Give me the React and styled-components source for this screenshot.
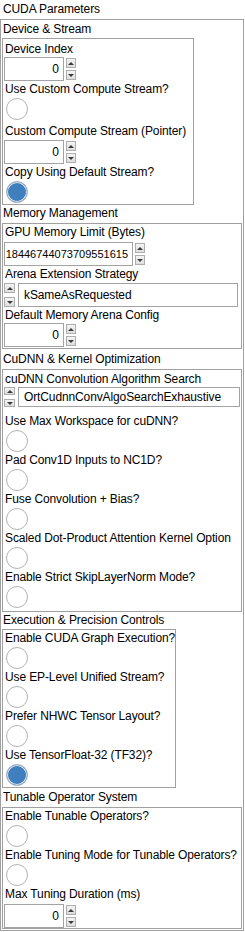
import styled, { createGlobalStyle } from "styled-components";

const GlobalStyle = createGlobalStyle`
  html, body {
    margin: 0;
    padding: 0;
    background: #ffffff;
  }
  body {
    font-family: "Liberation Sans", Arial, sans-serif;
    font-size: 12px;
    letter-spacing: -0.12px;
    color: #000;
  }
`;

const Panel = styled.div`
  width: 245px;
  height: 932px;
  overflow: hidden;
`;

const Caption = styled.div`
  height: 19px;
  box-sizing: border-box;
  padding: 1px 0 0 3px;
  line-height: 16px;
  white-space: nowrap;
`;

const Frame = styled.div`
  width: 244px;
  height: 912px;
  box-sizing: border-box;
  border: 1px solid #a0a0a0;
  display: flex;
  flex-direction: column;
`;

const SectionTitle = styled.div`
  height: ${(p) => p.$h}px;
  box-sizing: border-box;
  padding: ${(p) => p.$pt || 0}px 0 0 2px;
  line-height: 16px;
  white-space: nowrap;
`;

const Group = styled.div`
  box-sizing: border-box;
  width: ${(p) => p.$w}px;
  height: ${(p) => p.$h}px;
  margin-left: 1px;
  border: 1px solid #a0a0a0;
  padding-top: ${(p) => p.$pt || 0}px;
  display: flex;
  flex-direction: column;
  align-items: flex-start;
`;

const FieldLabel = styled.div`
  height: 16px;
  line-height: 16px;
  padding-left: 2px;
  margin-top: ${(p) => p.$mt || 0}px;
  white-space: nowrap;
`;

const ControlRow = styled.div`
  display: flex;
  align-items: center;
  gap: ${(p) => p.$gap || 2}px;
  margin: ${(p) => p.$mt || 0}px 0 0 1px;
`;

const NumBox = styled.div`
  width: ${(p) => p.$w}px;
  height: 24px;
  box-sizing: border-box;
  border: 1px solid #a3a3a3;
  background: #fff;
  text-align: right;
  padding-right: 4px;
  line-height: 22px;
  font-size: ${(p) => p.$fs || 12}px;
  letter-spacing: 0;
  white-space: nowrap;
  overflow: hidden;
`;

const TextBox = styled.div`
  width: ${(p) => p.$w}px;
  height: ${(p) => p.$h}px;
  box-sizing: border-box;
  border: 1px solid #a3a3a3;
  background: #fff;
  padding-left: 5px;
  line-height: ${(p) => p.$h - 2}px;
  white-space: nowrap;
  overflow: hidden;
`;

const Spinner = styled.div`
  display: flex;
  flex-direction: column;
  gap: ${(p) => p.$gap}px;
`;

const SpinButton = styled.div`
  width: ${(p) => p.$w}px;
  height: ${(p) => p.$h}px;
  box-sizing: border-box;
  border: 1px solid #adadad;
  background: linear-gradient(#f4f4f4, #dedede);
  display: flex;
  align-items: center;
  justify-content: center;

  &::after {
    content: "";
    width: 0;
    height: 0;
    border-left: 3px solid transparent;
    border-right: 3px solid transparent;
    ${(p) =>
      p.$down
        ? "border-top: 3px solid #3a3a3a;"
        : "border-bottom: 3px solid #3a3a3a;"}
  }
`;

const Led = styled.div`
  width: 22px;
  height: 22px;
  box-sizing: border-box;
  border-radius: 50%;
  margin: 1px 0 ${(p) => p.$mb || 0}px 3px;
  border: 1px solid ${(p) => (p.$on ? "#a9b4bf" : "#b3b3b3")};
  background: ${(p) => (p.$on ? "#3f7fbd" : "#ffffff")};
  box-shadow: ${(p) => (p.$on ? "inset 0 0 0 1px #dfe7ef" : "none")};
`;

function Spin({ w = 10, h = 10, gap = 2 }) {
  return (
    <Spinner $gap={gap}>
      <SpinButton $w={w} $h={h} />
      <SpinButton $w={w} $h={h} $down />
    </Spinner>
  );
}

function Numeric({ label, value = "0", w = 60, fs, mt, labelMt }) {
  return (
    <>
      <FieldLabel $mt={labelMt}>{label}</FieldLabel>
      <ControlRow $mt={mt}>
        <NumBox $w={w} $fs={fs}>
          {value}
        </NumBox>
        <Spin />
      </ControlRow>
    </>
  );
}

function Ring({ label, value, h = 24, w = 221, mt }) {
  const bh = h === 24 ? 10 : 8;
  return (
    <>
      <FieldLabel>{label}</FieldLabel>
      <ControlRow $mt={mt} $gap={3}>
        <Spin w={11} h={bh} gap={h - bh * 2} />
        <TextBox $w={w} $h={h}>
          {value}
        </TextBox>
      </ControlRow>
    </>
  );
}

function Bool({ label, on, mb }) {
  return (
    <>
      <FieldLabel>{label}</FieldLabel>
      <Led $on={on} $mb={mb} />
    </>
  );
}

export default function App() {
  return (
    <Panel>
      <GlobalStyle />
      <Caption>CUDA Parameters</Caption>
      <Frame>
        <SectionTitle $h={18} $pt={1}>
          Device &amp; Stream
        </SectionTitle>
        <Group $w={192} $h={167} $pt={2}>
          <Numeric label="Device Index" />
          <Bool label="Use Custom Compute Stream?" mb={3} />
          <Numeric label="Custom Compute Stream (Pointer)" mt={1} />
          <Bool label="Copy Using Default Stream?" on />
        </Group>

        <SectionTitle $h={18}>Memory Management</SectionTitle>
        <Group $w={240} $h={126}>
          <Numeric
            label="GPU Memory Limit (Bytes)"
            value="18446744073709551615"
            w={129}
            fs={11}
            mt={2}
          />
          <Ring label="Arena Extension Strategy" value="kSameAsRequested" mt={1} w={220} />
          <Numeric label="Default Memory Arena Config" />
        </Group>

        <SectionTitle $h={20} $pt={2}>
          CuDNN &amp; Kernel Optimization
        </SectionTitle>
        <Group $w={240} $h={243} $pt={1}>
          <Ring
            label="cuDNN Convolution Algorithm Search"
            value="OrtCudnnConvAlgoSearchExhaustive"
            h={20}
            w={222}
          />
          <FieldLabel $mt={6}>Use Max Workspace for cuDNN?</FieldLabel>
          <Led />
          <Bool label="Pad Conv1D Inputs to NC1D?" />
          <Bool label="Fuse Convolution + Bias?" />
          <Bool label="Scaled Dot-Product Attention Kernel Option" />
          <Bool label="Enable Strict SkipLayerNorm Mode?" />
        </Group>

        <SectionTitle $h={17}>Execution &amp; Precision Controls</SectionTitle>
        <Group $w={174} $h={159}>
          <Bool label="Enable CUDA Graph Execution?" />
          <Bool label="Use EP-Level Unified Stream?" />
          <Bool label="Prefer NHWC Tensor Layout?" />
          <Bool label="Use TensorFloat-32 (TF32)?" on />
        </Group>

        <SectionTitle $h={19} $pt={1}>
          Tunable Operator System
        </SectionTitle>
        <Group $w={240} $h={122}>
          <Bool label="Enable Tunable Operators?" />
          <Bool label="Enable Tuning Mode for Tunable Operators?" />
          <Numeric label="Max Tuning Duration (ms)" mt={2} labelMt={0} />
        </Group>
      </Frame>
    </Panel>
  );
}
